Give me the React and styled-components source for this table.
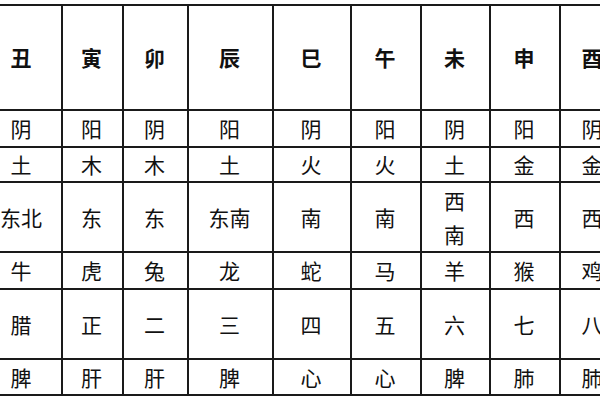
import React from "react";
import styled, { createGlobalStyle } from "styled-components";

const GlobalStyle = createGlobalStyle`
  html, body {
    margin: 0;
    padding: 0;
    background: #ffffff;
  }
  body {
    font-family: "Noto Sans CJK SC", "Noto Sans", sans-serif;
    color: #111111;
  }
`;

const widths = [80, 61, 65, 85, 78, 70, 69, 70, 66];

const header = ["丑", "寅", "卯", "辰", "巳", "午", "未", "申", "酉"];

const rows = [
  { height: 37, cells: ["阴", "阳", "阴", "阳", "阴", "阳", "阴", "阳", "阴"] },
  { height: 35, cells: ["土", "木", "木", "土", "火", "火", "土", "金", "金"] },
  {
    height: 70,
    cells: ["东北", "东", "东", "东南", "南", "南", ["西", "南"], "西", "西"],
  },
  { height: 37, cells: ["牛", "虎", "兔", "龙", "蛇", "马", "羊", "猴", "鸡"] },
  { height: 70, cells: ["腊", "正", "二", "三", "四", "五", "六", "七", "八"] },
  { height: 36, cells: ["脾", "肝", "肝", "脾", "心", "心", "脾", "肺", "肺"] },
];

const App = () => {
  return (
    <>
      <GlobalStyle />
      <Page>
        <Table>
          <colgroup>
            {widths.map((w, i) => (
              <col key={i} style={{ width: w }} />
            ))}
          </colgroup>
          <thead>
            <Row $height={105}>
              {header.map((h) => (
                <HeadCell key={h}>{h}</HeadCell>
              ))}
            </Row>
          </thead>
          <tbody>
            {rows.map((r, ri) => (
              <Row key={ri} $height={r.height}>
                {r.cells.map((c, ci) => (
                  <Cell key={ci}>
                    {Array.isArray(c) ? (
                      <Stack>
                        {c.map((part) => (
                          <span key={part}>{part}</span>
                        ))}
                      </Stack>
                    ) : (
                      c
                    )}
                  </Cell>
                ))}
              </Row>
            ))}
          </tbody>
        </Table>
      </Page>
    </>
  );
};

export default App;

const Page = styled.div`
  width: 600px;
  height: 400px;
  overflow: hidden;
  background: #ffffff;
  padding-top: 4px;
  box-sizing: border-box;
`;

const Table = styled.table`
  border-collapse: collapse;
  table-layout: fixed;
  width: 644px;
  margin-left: -19px;
`;

const Row = styled.tr`
  height: ${(p) => p.$height}px;
`;

const HeadCell = styled.th`
  border: 2px solid #1a1a1a;
  padding: 0 2px 0 0;
  font-size: 21px;
  font-weight: 700;
  text-align: center;
  vertical-align: middle;
  line-height: 1;
`;

const Cell = styled.td`
  border: 2px solid #1a1a1a;
  padding: 0 2px 0 0;
  font-size: 21px;
  font-weight: 400;
  text-align: center;
  vertical-align: middle;
  line-height: 1;
  white-space: nowrap;
`;

const Stack = styled.div`
  display: flex;
  flex-direction: column;
  align-items: center;
  gap: 13px;
`;
